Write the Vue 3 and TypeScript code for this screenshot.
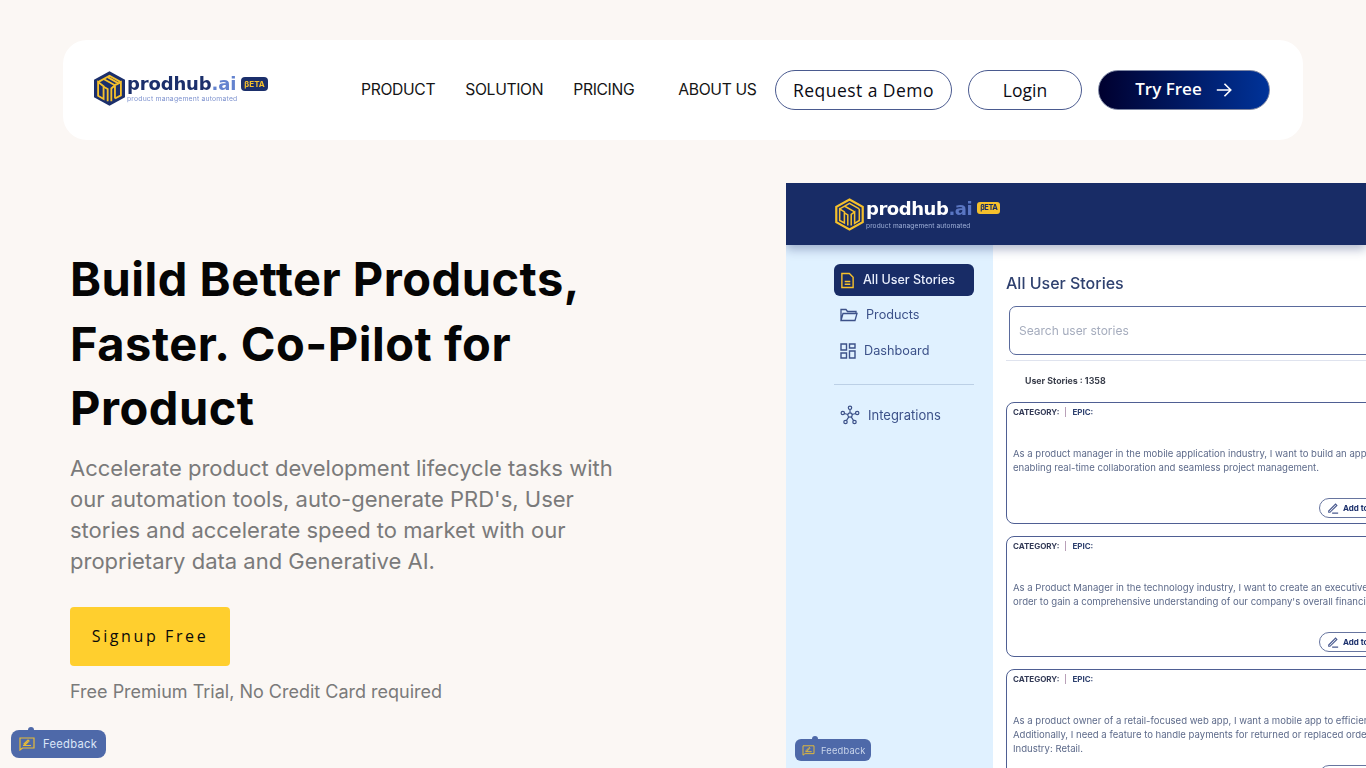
<script setup lang="ts">
const navLinks = ['PRODUCT', 'SOLUTION', 'PRICING', 'ABOUT US']

const heroLines = [
  'Accelerate product development lifecycle tasks with',
  "our automation tools, auto-generate PRD's, User",
  'stories and accelerate speed to market with our',
  'proprietary data and Generative AI.',
]

const stories = [
  {
    lines: [
      'As a product manager in the mobile application industry, I want to build an app',
      'enabling real-time collaboration and seamless project management.',
    ],
  },
  {
    lines: [
      'As a Product Manager in the technology industry, I want to create an executive',
      "order to gain a comprehensive understanding of our company's overall financial",
    ],
  },
  {
    lines: [
      'As a product owner of a retail-focused web app, I want a mobile app to efficiently',
      'Additionally, I need a feature to handle payments for returned or replaced orders',
      'Industry: Retail.',
    ],
  },
]
</script>

<template>
  <div class="page">
    <header class="nav">
      <div class="logo">
        <svg class="cube" viewBox="3 1 34 38" width="31" height="35">
          <path d="M20 1 37 10.5v19L20 39 3 29.5v-19z" fill="#1b2f6b" />
          <g fill="none" stroke="#f5c02c" stroke-width="2">
            <path d="M7.5 13 20 6l12.5 7" />
            <path d="M13.5 9.5 26 16.5M18 7.5l12 7" />
            <path d="M7.5 13v15l6 3.5V17.5L7.5 13z" />
            <path d="M18 34V20.5L13.5 18" />
            <path d="M22 34V20l4-3.5 0 14.5M26 31l6.5-3.5V13L26 16.5" />
          </g>
        </svg>
        <div class="logo-text">
          <div class="logo-name">prodhub<span class="dot-ai">.ai</span><span class="beta">βETA</span></div>
          <div class="logo-tag">product management automated</div>
        </div>
      </div>
      <nav class="links">
        <a v-for="link in navLinks" :key="link" class="link">{{ link }}</a>
      </nav>
      <div class="actions">
        <button class="pill demo">Request a Demo</button>
        <button class="pill login">Login</button>
        <button class="pill try">
          <span class="try-label">Try Free</span>
          <svg viewBox="0 0 20 20" width="18" height="18" fill="none" stroke="#fff" stroke-width="1.8">
            <path d="M2 10h15M10.5 3l7 7-7 7" />
          </svg>
        </button>
      </div>
    </header>

    <section class="hero">
      <div class="copy">
        <h1>Build Better Products,<br />Faster. Co-Pilot for<br />Product</h1>
        <p class="lead">
          <span v-for="line in heroLines" :key="line" class="lead-line">{{ line }}</span>
        </p>
        <button class="signup">Signup Free</button>
        <p class="note">Free Premium Trial, No Credit Card required</p>
      </div>

      <div class="mock">
        <div class="mock-head">
          <svg class="mock-cube" viewBox="3 1 34 38" width="29" height="33">
            <g fill="none" stroke="#f5c02c">
              <path d="M20 2.5 35.5 11v18L20 37.5 4.5 29V11z" stroke-width="2.6" />
              <path d="M8.5 13.5 20 7l11.5 6.5M14 10l12 7M8.5 13.5V27l5.5 3V17z" stroke-width="1.8" />
              <path d="M18 33V20.5L14 18M22 33V20l4-3v13.5l5.5-3.5V13.5" stroke-width="1.8" />
            </g>
          </svg>
          <div>
            <div class="mock-name">prodhub<span class="mock-ai">.ai</span><span class="mock-beta">βETA</span></div>
            <div class="mock-tag">product management automated</div>
          </div>
        </div>
        <div class="mock-body">
          <aside class="side">
            <div class="side-item active">
              <svg viewBox="0 0 16 18" width="15" height="17" fill="none" stroke="#f5c02c" stroke-width="1.5">
                <path d="M2 1.5h8l4 4v11H2zM5 10h6M5 13h6" />
              </svg>
              <span>All User Stories</span>
            </div>
            <div class="side-item products">
              <svg viewBox="0 0 18 14" width="18" height="14" fill="none" stroke="#3c5189" stroke-width="1.3">
                <path d="M1 12.5V1.5h5l1.5 2H16v2M1 12.5l2-7h14l-2 7z" />
              </svg>
              <span>Products</span>
            </div>
            <div class="side-item dash">
              <svg viewBox="0 0 16 16" width="16" height="16" fill="none" stroke="#3c5189" stroke-width="1.4">
                <path d="M1 1h5.5v6H1zM9.5 1H15v4H9.5zM9.5 8H15v7H9.5zM1 10h5.5v5H1z" />
              </svg>
              <span>Dashboard</span>
            </div>
            <hr class="side-rule" />
            <div class="side-item integ">
              <svg viewBox="0 0 20 20" width="20" height="20" fill="none" stroke="#3c5189" stroke-width="1.2">
                <circle cx="10" cy="10" r="2.2" />
                <circle cx="10" cy="2.8" r="1.7" />
                <circle cx="2.8" cy="8" r="1.7" />
                <circle cx="17.2" cy="8" r="1.7" />
                <circle cx="5.5" cy="17" r="1.7" />
                <circle cx="14.5" cy="17" r="1.7" />
                <path d="M10 4.5v3.3M4.4 8.5l3.5 1M15.6 8.5l-3.5 1M6.4 15.6l2.4-3.7M13.6 15.6l-2.4-3.7" />
              </svg>
              <span>Integrations</span>
            </div>
          </aside>
          <main class="stories">
            <h2>All User Stories</h2>
            <div class="search">Search user stories</div>
            <div class="count">User Stories : 1358</div>
            <article v-for="(story, i) in stories" :key="i" class="story">
              <div class="meta">
                <span>CATEGORY:</span><i class="sep"></i><span class="epic">EPIC:</span>
              </div>
              <div class="story-text">
                <div v-for="line in story.lines" :key="line">{{ line }}</div>
              </div>
              <div class="add">
                <svg viewBox="0 0 14 14" width="12" height="12" fill="none" stroke="#4a5a8f" stroke-width="1.3">
                  <path d="M2 10.5 10 2.5l1.5 1.5-8 8H2zM6 13h7" />
                </svg>
                <b>Add to</b>
              </div>
            </article>
          </main>
        </div>
        <div class="feedback small">
          <svg viewBox="0 0 16 14" width="13" height="11" fill="none" stroke="#e9bd36" stroke-width="1.2">
            <path d="M1 1h14v10H3.5L1 13zM4 8.5h8M5 7l4-4 1 1-4 4z" />
          </svg>
          <span>Feedback</span>
        </div>
      </div>
    </section>

    <div class="feedback main-fb">
      <svg viewBox="0 0 16 14" width="16" height="14" fill="none" stroke="#e9bd36" stroke-width="1.2">
        <path d="M1 1h14v10H3.5L1 13zM4 8.5h8M5 7l4-4 1 1-4 4z" />
      </svg>
      <span>Feedback</span>
    </div>
  </div>
</template>

<style>
html,
body {
  margin: 0;
  background: #fbf7f4;
}
</style>

<style scoped>
.page {
  position: relative;
  width: 1366px;
  height: 768px;
  overflow: hidden;
  box-sizing: border-box;
  padding: 40px 0 0 63px;
  background: #fbf7f4;
  font-family: Inter, "Liberation Sans", sans-serif;
}

.nav {
  display: flex;
  align-items: center;
  width: 1240px;
  height: 100px;
  box-sizing: border-box;
  padding: 0 33px 0 31px;
  background: #fff;
  border-radius: 24px;
}

.logo {
  display: flex;
  align-items: center;
  gap: 2px;
  flex: none;
  width: 267px;
  margin-top: -3px;
  filter: blur(0.3px);
}

.logo-name {
  display: flex;
  align-items: center;
  font-family: "DejaVu Sans", sans-serif;
  font-weight: 700;
  font-size: 18px;
  line-height: 20px;
  letter-spacing: -0.15px;
  color: #1b2f6b;
}

.dot-ai {
  color: #6483cf;
}

.beta {
  margin-left: 5px;
  padding: 1px 3px;
  background: #1b2f6b;
  border-radius: 4px;
  color: #f5c02c;
  font-family: Inter, sans-serif;
  font-size: 8px;
  line-height: 12px;
  letter-spacing: 0.1px;
}

.logo-tag {
  margin-top: 1px;
  font-size: 6.8px;
  line-height: 8px;
  color: #7f93cf;
  letter-spacing: 0.2px;
}

.links {
  display: flex;
  flex: none;
  gap: 30px;
  margin-top: -1px;
}

.link {
  font-size: 15.7px;
  line-height: 20px;
  color: #151515;
  letter-spacing: -0.35px;
  white-space: nowrap;
}

.link:nth-child(3) {
  margin-right: 14px;
}

.actions {
  display: flex;
  gap: 16px;
  margin-left: auto;
}

.pill {
  height: 40px;
  box-sizing: border-box;
  border: 1px solid #4a5a8f;
  border-radius: 20px;
  background: #fff;
  font-family: "Open Sans", sans-serif;
  font-size: 17px;
  font-weight: 500;
  color: #0b0b14;
  padding: 0;
}

.demo {
  width: 177px;
  font-size: 17.5px;
  letter-spacing: 0.45px;
}

.login {
  width: 114px;
  font-size: 17.5px;
}

.try {
  display: flex;
  align-items: center;
  justify-content: center;
  gap: 13px;
  width: 172px;
  border: 1px solid #7d86a3;
  background: linear-gradient(90deg, #00002f 0%, #003399 100%);
  color: #fff;
  font-weight: 600;
}

.try-label {
  margin-top: -3px;
}

.hero {
  display: flex;
  margin-top: 43px;
}

.copy {
  width: 716px;
  padding: 64px 0 0 7px;
  box-sizing: border-box;
}

h1 {
  margin: 0;
  font-family: Inter, sans-serif;
  font-size: 47px;
  font-weight: 700;
  line-height: 64.5px;
  letter-spacing: 0.5px;
  white-space: nowrap;
  color: #050505;
}

.lead {
  margin: 12px 0 0;
  font-size: 22px;
  line-height: 31px;
  color: #7a7a7a;
}

.lead-line {
  display: block;
  white-space: nowrap;
}

.signup {
  display: block;
  width: 160px;
  height: 59px;
  margin-top: 30px;
  padding: 0;
  border: 0;
  border-radius: 4px;
  background: #ffcf2e;
  font-family: "Open Sans", sans-serif;
  font-size: 16px;
  font-weight: 500;
  letter-spacing: 2.6px;
  color: #0a0a0a;
}

.note {
  margin: 15px 0 0;
  font-size: 18px;
  line-height: 22px;
  color: #7a7a7a;
}

.mock {
  position: relative;
  width: 580px;
  flex: none;
  margin-left: 7px;
  height: 585px;
  overflow: hidden;
  background: #fff;
  filter: blur(0.35px);
}

.mock-head {
  position: relative;
  z-index: 1;
  display: flex;
  align-items: center;
  gap: 2px;
  height: 62px;
  box-sizing: border-box;
  padding: 0 0 0 49px;
  background: #182c66;
  box-shadow: 0 4px 10px rgba(24, 44, 102, 0.35);
}

.mock-name {
  display: flex;
  align-items: center;
  margin-bottom: 5px;
  font-family: "DejaVu Sans", sans-serif;
  font-weight: 700;
  font-size: 18px;
  line-height: 19px;
  letter-spacing: -0.45px;
  color: #fff;
}

.mock-ai {
  color: #5a76c2;
}

.mock-beta {
  margin-left: 5px;
  padding: 1px 3px;
  background: #f5c02c;
  border-radius: 3px;
  color: #182c66;
  font-family: Inter, sans-serif;
  font-size: 7.5px;
  line-height: 10px;
}

.mock-tag {
  font-size: 6.6px;
  line-height: 7px;
  color: #9fb0d8;
  letter-spacing: 0.1px;
}

.mock-body {
  display: flex;
  height: 523px;
}

.side {
  flex: none;
  width: 207px;
  box-sizing: border-box;
  padding: 19px 0 0 48px;
  background: #e0f1ff;
}

.side-item {
  display: flex;
  align-items: center;
  gap: 7px;
  width: 140px;
  height: 32px;
  box-sizing: border-box;
  padding-left: 6px;
  font-size: 12.7px;
  color: #3c5189;
}

.side-item span {
  margin-top: -2px;
}

.side-item.active {
  gap: 8px;
  background: #182c66;
  border-radius: 6px;
  color: #e8eefc;
  font-weight: 500;
  font-size: 12.5px;
}

.products {
  margin-top: 3px;
  gap: 8px;
}

.dash {
  margin-top: 4px;
  gap: 8px;
}

.side-rule {
  width: 140px;
  margin: 17px 0 14px;
  border: 0;
  border-top: 1px solid #bcd0e6;
}

.side-item.integ {
  gap: 8px;
  font-size: 13px;
}

.integ span {
  margin-top: 0;
}

.stories {
  flex: 1;
  min-width: 0;
  padding: 28px 0 0 13px;
  overflow: hidden;
}

h2 {
  margin: 0;
  font-size: 16px;
  font-weight: 500;
  line-height: 20px;
  color: #2f416f;
}

.search {
  width: 500px;
  height: 49px;
  box-sizing: border-box;
  margin: 13px 0 0 3px;
  padding: 0 9px;
  border: 1px solid #5a6a9c;
  border-radius: 7px;
  font-size: 12px;
  line-height: 47px;
  color: #a5acbd;
}

.count {
  width: 500px;
  height: 42px;
  margin-top: 5px;
  padding-left: 19px;
  box-sizing: border-box;
  border-top: 1px solid #dfe3ee;
  font-size: 8.8px;
  font-weight: 700;
  line-height: 39px;
  color: #3b3f4c;
}

.story {
  position: relative;
  width: 500px;
  height: 121.5px;
  box-sizing: border-box;
  margin-bottom: 12px;
  padding: 3px 6px;
  border: 1px solid #4f5f93;
  border-radius: 8px;
}

.meta {
  display: flex;
  align-items: center;
  font-size: 8px;
  font-weight: 700;
  line-height: 12px;
  color: #333a56;
}

.sep {
  width: 1px;
  height: 10px;
  margin: 0 6px;
  background: #b9a0b8;
}

.epic {
  color: #2f416f;
}

.story-text {
  margin-top: 29px;
  font-size: 9.55px;
  line-height: 14px;
  color: #5d6a8a;
  white-space: nowrap;
}

.add {
  position: absolute;
  left: 312px;
  bottom: 4.5px;
  display: flex;
  align-items: center;
  gap: 4px;
  width: 70px;
  height: 20px;
  box-sizing: border-box;
  padding-left: 7px;
  border: 1px solid #67759f;
  border-radius: 10px;
  background: #fff;
  font-size: 8px;
  color: #1b2f6b;
}

.feedback {
  position: absolute;
  display: flex;
  align-items: center;
  background: #4e69a9;
  color: #dbe6f8;
}

.feedback::before {
  content: "";
  position: absolute;
  top: -3px;
  left: 17px;
  width: 6px;
  height: 6px;
  border-radius: 50%;
  background: inherit;
}

.main-fb {
  left: 11px;
  bottom: 10px;
  width: 95px;
  height: 28px;
  gap: 8px;
  padding-left: 8px;
  box-sizing: border-box;
  border-radius: 8px;
  font-size: 11.2px;
  letter-spacing: 0.3px;
}

.small {
  left: 9px;
  top: 556px;
  width: 76px;
  height: 22px;
  gap: 6px;
  padding-left: 7px;
  box-sizing: border-box;
  border-radius: 6px;
  font-size: 9.3px;
  letter-spacing: 0.2px;
  color: #c8d4ea;
}
</style>
